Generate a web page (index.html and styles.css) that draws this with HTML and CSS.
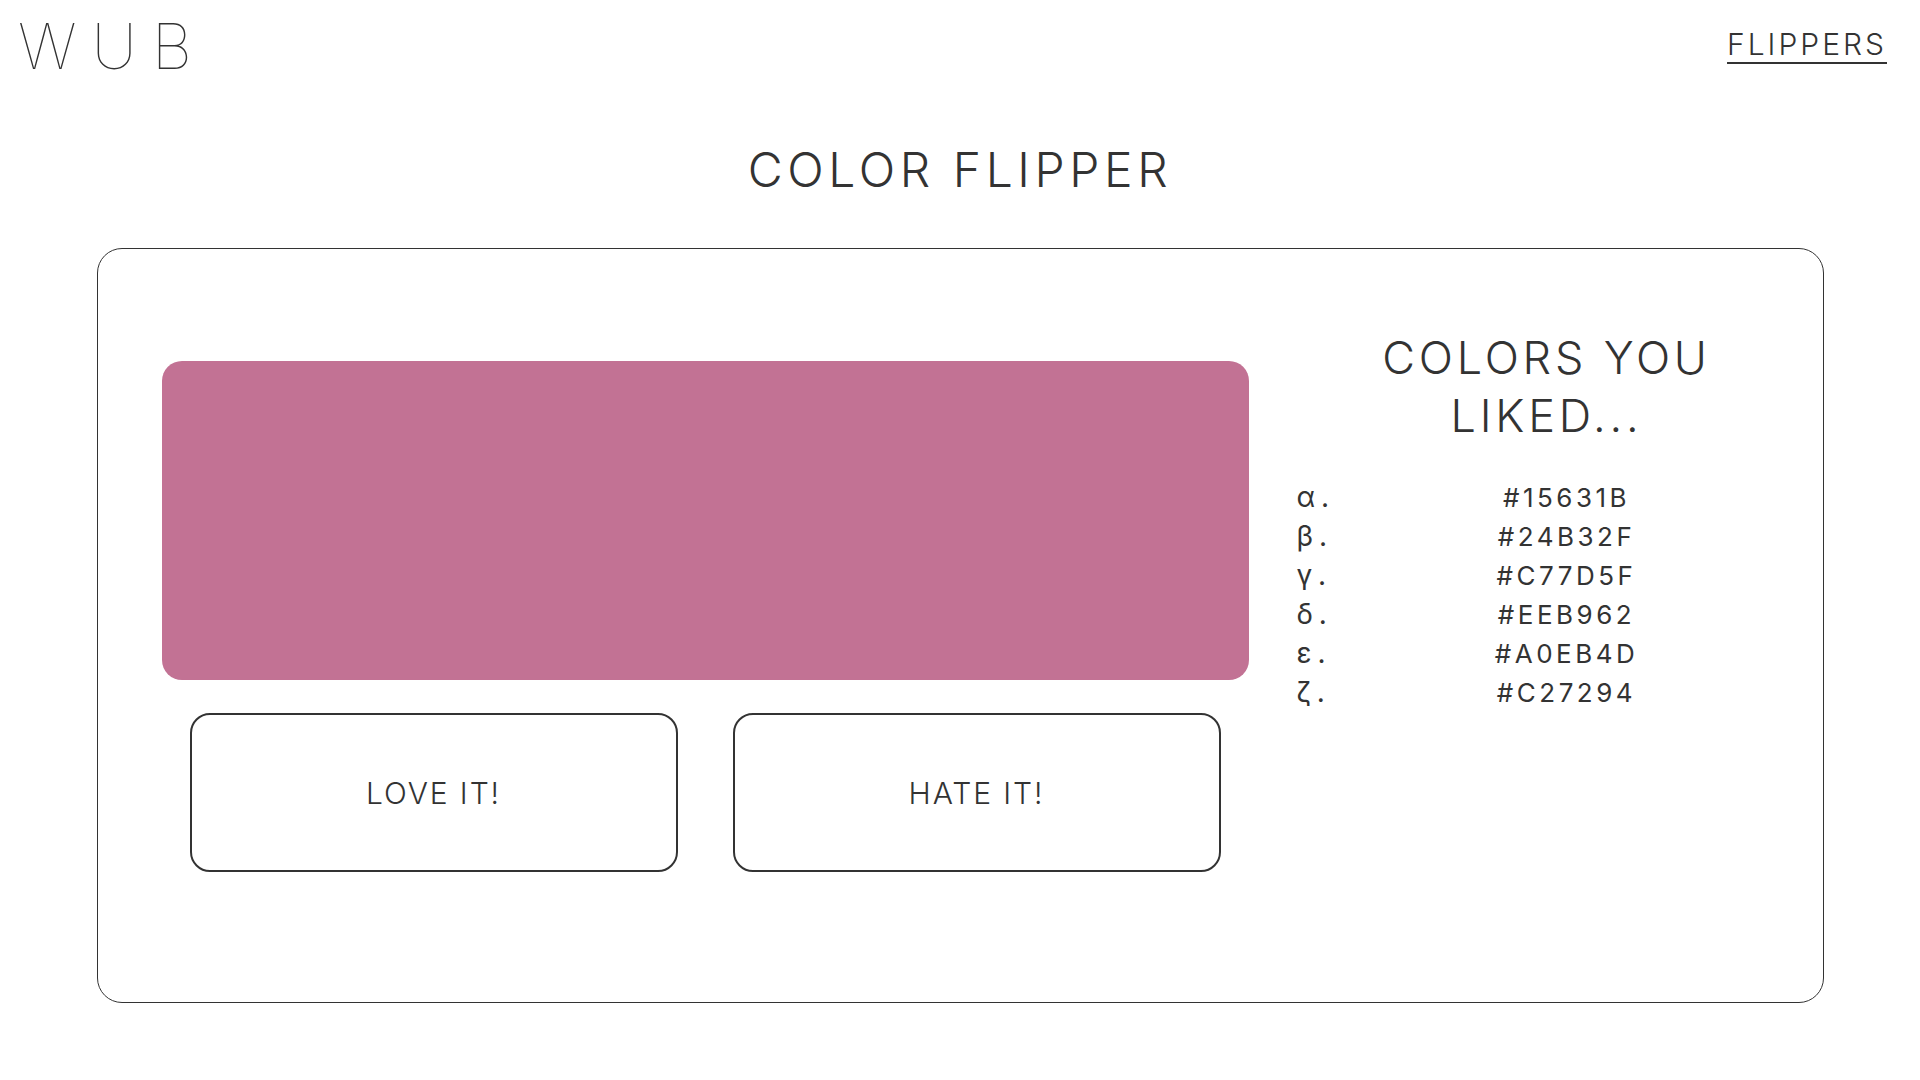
FILE: index.html
```html
<!DOCTYPE html>
<html lang="en">
<head>
<meta charset="utf-8">
<title>Color Flipper</title>
<link rel="stylesheet" href="styles.css">
</head>
<body>
<header class="topbar">
  <div class="logo">WUB</div>
  <a class="nav-link" href="#">FLIPPERS</a>
</header>
<h1 class="title">COLOR FLIPPER</h1>
<main class="card">
  <section class="flipper">
    <div class="swatch" style="background-color:#C27294"></div>
    <div class="actions">
      <button class="btn">LOVE IT!</button>
      <button class="btn">HATE IT!</button>
    </div>
  </section>
  <aside class="liked">
    <h2 class="liked-title">COLORS YOU<br>LIKED...</h2>
    <ul class="liked-list">
      <li><span class="idx">α .</span><span class="hex">#15631B</span></li>
      <li><span class="idx">β .</span><span class="hex">#24B32F</span></li>
      <li><span class="idx">γ .</span><span class="hex">#C77D5F</span></li>
      <li><span class="idx">δ .</span><span class="hex">#EEB962</span></li>
      <li><span class="idx">ε .</span><span class="hex">#A0EB4D</span></li>
      <li><span class="idx">ζ .</span><span class="hex">#C27294</span></li>
    </ul>
  </aside>
</main>
</body>
</html>
```
FILE: styles.css
```css
* { box-sizing: border-box; }
html, body { margin: 0; padding: 0; background: #fff; }
body {
  font-family: Inter, "Noto Sans", "DejaVu Sans", sans-serif;
  color: #333;
  width: 1920px;
  min-height: 1080px;
}
.topbar {
  display: flex;
  justify-content: space-between;
  align-items: flex-start;
  padding: 15px 33px 0 18px;
}
.logo {
  font-size: 63px;
  line-height: 1;
  font-weight: 100;
  letter-spacing: 15px;
}
.nav-link {
  margin-top: 14px;
  font-size: 30px;
  line-height: 1;
  font-weight: 300;
  color: #333;
  text-decoration: underline;
  text-decoration-thickness: 2px;
  text-underline-offset: 7px;
  letter-spacing: 3px;
}
.title {
  margin: 68px 0 0;
  text-align: center;
  font-size: 48px;
  line-height: 1;
  font-weight: 300;
  letter-spacing: 4.6px;
}
.card {
  width: 1727px;
  height: 755px;
  margin: 54px auto 0;
  border: 1.5px solid #333;
  border-radius: 25px;
  display: flex;
  padding: 112px 26px 0 64px;
  gap: 48px;
}
.flipper {
  width: 1087px;
  display: flex;
  flex-direction: column;
}
.swatch {
  height: 319px;
  border-radius: 20px;
}
.actions {
  display: flex;
  gap: 55px;
  margin-top: 33px;
  padding: 0 28px;
}
.btn {
  flex: 1;
  height: 159px;
  background: #fff;
  border: 2px solid #333;
  border-radius: 20px;
  font-family: inherit;
  font-size: 30px;
  font-weight: 300;
  color: #333;
  letter-spacing: 1.9px;
}
.liked {
  width: 500px;
  margin-top: -32px;
}
.liked-title {
  margin: 0;
  text-align: center;
  font-size: 45px;
  line-height: 58px;
  font-weight: 300;
  letter-spacing: 3.8px;
}
.liked-list {
  list-style: none;
  margin: 33px 0 0;
  padding: 0;
}
.liked-list li {
  display: grid;
  grid-template-columns: 40px 1fr;
  font-size: 26px;
  line-height: 39px;
  font-weight: 400;
}
.idx { white-space: nowrap; font-size: 28px; letter-spacing: -1px; }
.hex { text-align: center; letter-spacing: 3.5px; }
```
